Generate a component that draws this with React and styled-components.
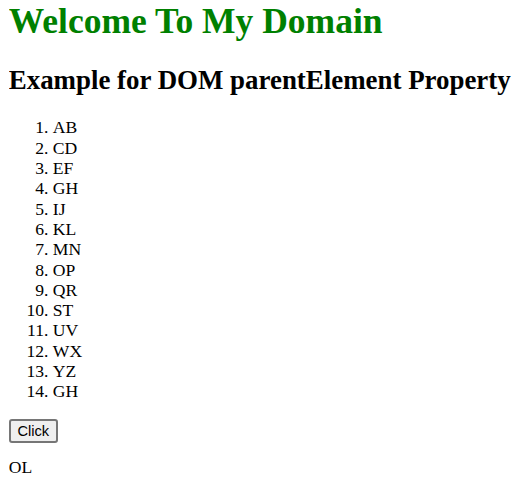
import React, { useState } from "react";
import styled, { createGlobalStyle } from "styled-components";

const GlobalStyle = createGlobalStyle`
  html, body {
    background: #fff;
  }
  body {
    margin: 0 8.8px 8.8px;
    font-family: "Liberation Serif", "Times New Roman", serif;
    font-size: 17.6px;
    line-height: 20.3px;
    color: #000;
  }
`;

const Title = styled.h1`
  font-size: 35.5px;
  line-height: 40px;
  font-weight: bold;
  color: green;
  margin: 1px 0 23.6px;
`;

const Subtitle = styled.h2`
  font-size: 26.9px;
  line-height: 31px;
  font-weight: bold;
  margin: 21.9px 0;
`;

const List = styled.ol`
  margin: 17.6px 0;
  padding-left: 44px;
`;

const Item = styled.li``;

const ClickButton = styled.button`
  font-family: "Liberation Sans", Arial, sans-serif;
  font-size: 14.67px;
  line-height: 17px;
  padding: 1.5px 6.6px;
  color: #000;
  background: #efefef;
  border: 2px solid #767676;
  border-radius: 3px;
  cursor: pointer;
`;

const Output = styled.p`
  margin: 14px 0;
`;

const items = ["AB", "CD", "EF", "GH", "IJ", "KL", "MN", "OP", "QR", "ST", "UV", "WX", "YZ", "GH"];

export default function App() {
  const [parent] = useState("OL");
  return (
    <>
      <GlobalStyle />
      <Title>Welcome To My Domain</Title>
      <Subtitle>Example for DOM parentElement Property</Subtitle>
      <List>
        {items.map((t, i) => (
          <Item key={i}>{t}</Item>
        ))}
      </List>
      <ClickButton>Click</ClickButton>
      <Output>{parent}</Output>
    </>
  );
}
